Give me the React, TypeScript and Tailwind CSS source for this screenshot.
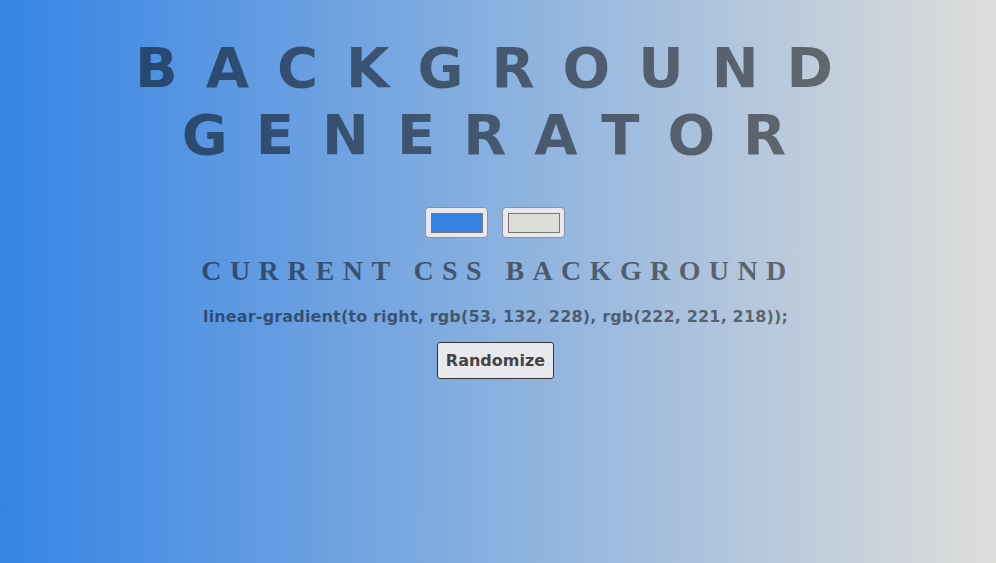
const ColorSwatch = ({ color }: { color: string }) => {
  return (
    <div className="flex items-center justify-center w-[63px] h-[31px] rounded-[4px] border border-[#8f8f9d] bg-[#e9e9ed]">
      <div className="w-[52px] h-[20px] border border-[#767676]" style={{ backgroundColor: color }} />
    </div>
  );
};

export default function App() {
  const left = "rgb(53, 132, 228)";
  const right = "rgb(222, 221, 218)";
  const css = `linear-gradient(to right, ${left}, ${right});`;

  return (
    <div
      className="w-full h-[563px] flex flex-col items-center text-center text-[rgba(0,0,0,0.5)] font-['DejaVu_Sans',sans-serif] overflow-hidden"
      style={{ background: `linear-gradient(to right, ${left}, ${right})` }}
    >
      <h1 className="mt-[34px] text-[56px] leading-[67px] font-bold tracking-[0.5em] w-[800px]">
        BACKGROUND GENERATOR
      </h1>
      <div className="mt-[39px] mr-[6px] flex gap-[14px]">
        <ColorSwatch color={left} />
        <ColorSwatch color={right} />
      </div>
      <h3 className="mt-[17px] text-[28px] leading-[32px] font-bold tracking-[0.3em] font-['Liberation_Serif',serif]">
        CURRENT CSS BACKGROUND
      </h3>
      <p className="mt-[20px] mr-[5px] text-[16px] leading-[19px] font-bold tracking-[0.16px]">{css}</p>
      <button className="mt-[16px] mr-[5px] px-[8px] py-[8px] text-[16px] leading-[19px] font-bold text-[#444] bg-[#e9e9ed] border border-[#333] rounded-[3px]">
        Randomize
      </button>
    </div>
  );
}
